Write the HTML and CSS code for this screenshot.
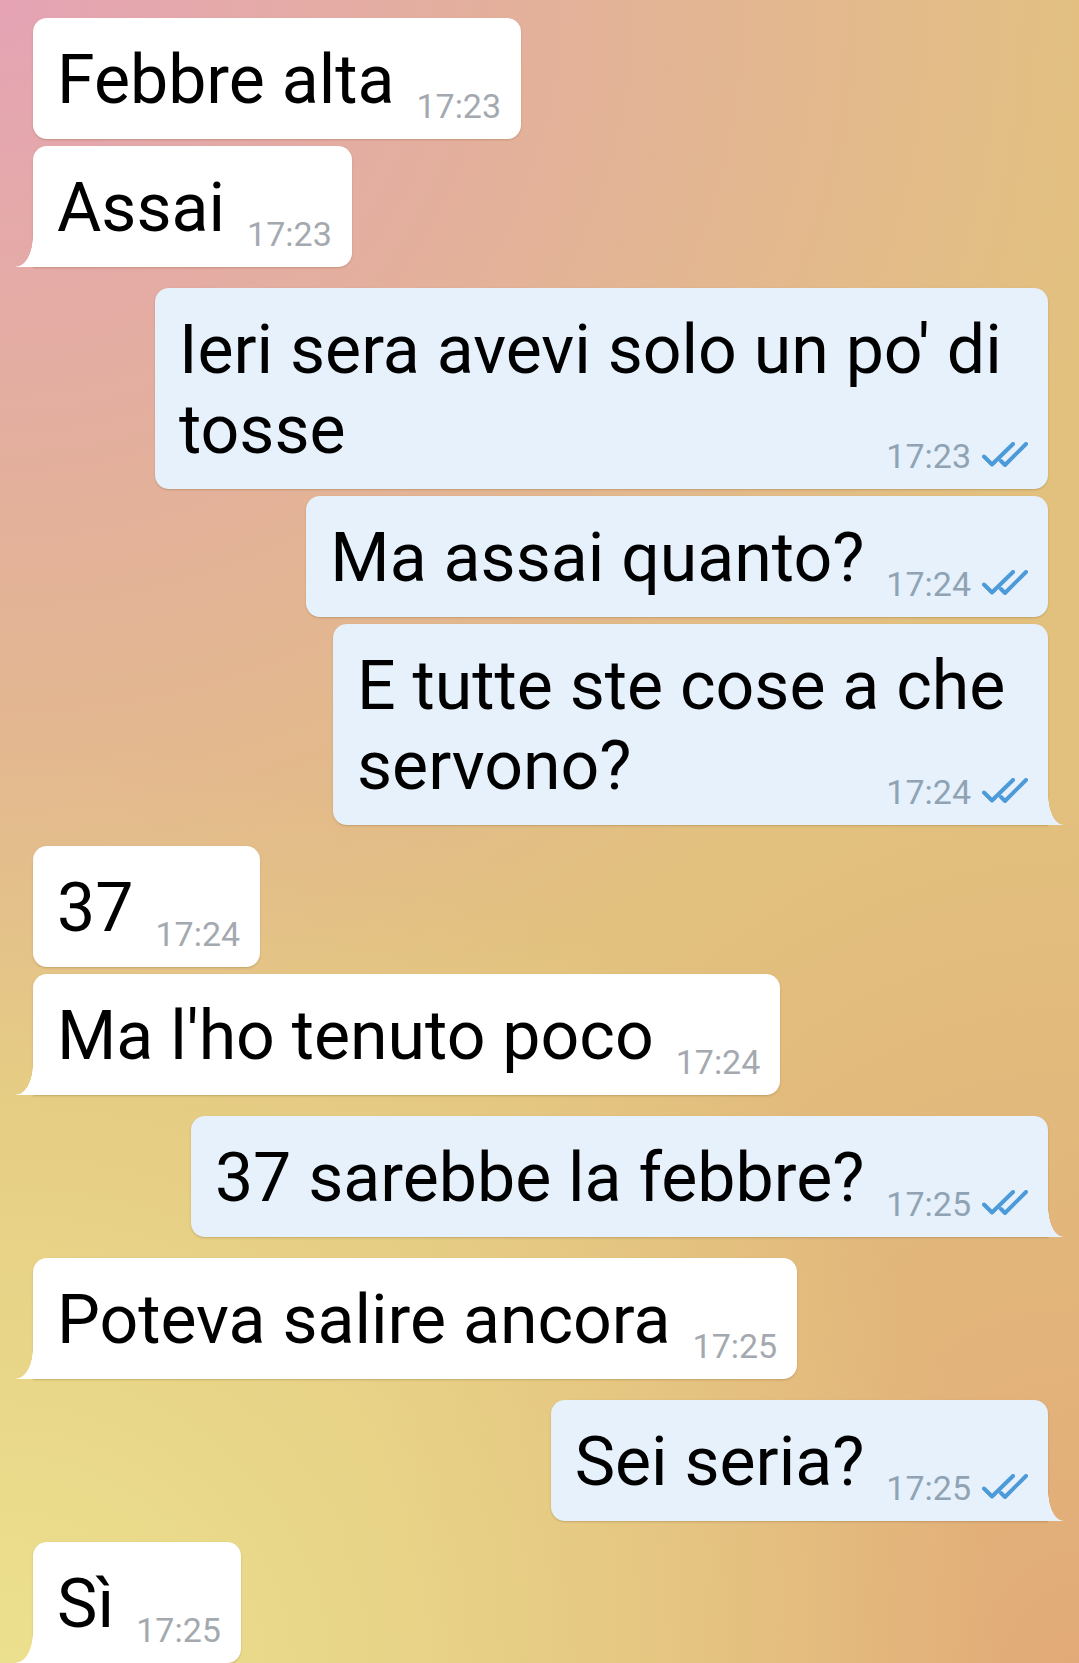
FILE: index.html
```html
<!DOCTYPE html>
<html lang="it">
<head>
    <meta charset="UTF-8">
    <meta name="viewport" content="width=device-width, initial-scale=1.0">
    <title>Chat</title>
    <link rel="stylesheet" href="styles.css">
</head>
<body>
    <div class="chat">
        <div class="bubble in">
            <span class="text">Febbre alta</span><span class="meta">17:23</span>
        </div>
        <div class="bubble in tail">
            <span class="text">Assai</span><span class="meta">17:23</span>
        </div>

        <div class="bubble out wide">
            Ieri sera avevi solo un po' di tosse<span class="meta">17:23<svg class="check" viewBox="0 0 46 26"><path d="M2 14.5 L10 22.5 L31 2"/><path d="M19 19 L23 23 L44 2"/></svg></span>
        </div>
        <div class="bubble out">
            <span class="text">Ma assai quanto?</span><span class="meta">17:24<svg class="check" viewBox="0 0 46 26"><path d="M2 14.5 L10 22.5 L31 2"/><path d="M19 19 L23 23 L44 2"/></svg></span>
        </div>
        <div class="bubble out tail mid">
            E tutte ste cose a che servono?<span class="meta">17:24<svg class="check" viewBox="0 0 46 26"><path d="M2 14.5 L10 22.5 L31 2"/><path d="M19 19 L23 23 L44 2"/></svg></span>
        </div>

        <div class="bubble in">
            <span class="text">37</span><span class="meta">17:24</span>
        </div>
        <div class="bubble in tail">
            <span class="text">Ma l'ho tenuto poco</span><span class="meta">17:24</span>
        </div>

        <div class="bubble out tail">
            <span class="text">37 sarebbe la febbre?</span><span class="meta">17:25<svg class="check" viewBox="0 0 46 26"><path d="M2 14.5 L10 22.5 L31 2"/><path d="M19 19 L23 23 L44 2"/></svg></span>
        </div>

        <div class="bubble in tail">
            <span class="text">Poteva salire ancora</span><span class="meta">17:25</span>
        </div>

        <div class="bubble out tail">
            <span class="text">Sei seria?</span><span class="meta">17:25<svg class="check" viewBox="0 0 46 26"><path d="M2 14.5 L10 22.5 L31 2"/><path d="M19 19 L23 23 L44 2"/></svg></span>
        </div>

        <div class="bubble in tail">
            <span class="text">Sì</span><span class="meta">17:25</span>
        </div>
    </div>
</body>
</html>
```

FILE: styles.css
```css
body {
    margin: 0;
    font-family: Roboto, "Noto Sans", sans-serif;
}

.chat {
    display: flex;
    flex-direction: column;
    align-items: flex-start;
    min-height: 100vh;
    box-sizing: border-box;
    padding: 18px 31px 0 33px;
    overflow: hidden;
    background:
        radial-gradient(1150px 1100px at 0 0, rgba(229, 163, 180, 1) 0%, rgba(229, 163, 180, 0.6) 40%, rgba(229, 163, 180, 0) 100%),
        radial-gradient(1000px 950px at 0 100%, rgba(236, 225, 142, 1) 0%, rgba(236, 225, 142, 0.6) 40%, rgba(236, 225, 142, 0) 100%),
        radial-gradient(750px 950px at 100% 100%, rgba(226, 170, 120, 1) 0%, rgba(226, 170, 120, 0.5) 45%, rgba(226, 170, 120, 0) 100%),
        #e2c17e;
}

.bubble {
    position: relative;
    display: flow-root;
    max-width: 893px;
    box-sizing: border-box;
    margin-bottom: 7px;
    padding: 22px 20px 19px 24px;
    border-radius: 14px;
    background-color: #fff;
    color: #000;
    font-size: 68px;
    line-height: 80px;
    box-shadow: 0 1px 2px rgba(120, 85, 40, 0.3);
}

.bubble:last-child {
    margin-bottom: 0;
}

.bubble.out {
    align-self: flex-end;
    background-color: #e6f1fb;
}

.bubble.wide {
    width: 893px;
}

.bubble.mid {
    width: 715px;
}

.bubble.tail {
    margin-bottom: 21px;
}

.bubble.in.tail {
    border-bottom-left-radius: 0;
}

.bubble.in.tail::before {
    content: '';
    position: absolute;
    left: -17px;
    bottom: 0;
    width: 17px;
    height: 30px;
    background: radial-gradient(17px 30px at 0 0, rgba(255, 255, 255, 0) 97%, #fff 100%);
}

.bubble.out.tail {
    border-bottom-right-radius: 0;
}

.bubble.out.tail::after {
    content: '';
    position: absolute;
    right: -15px;
    bottom: 0;
    width: 15px;
    height: 30px;
    background: radial-gradient(15px 30px at 100% 0, rgba(230, 241, 251, 0) 97%, #e6f1fb 100%);
}

.meta {
    float: right;
    margin: 49px 0 -3px 22px;
    font-size: 34px;
    line-height: 34px;
    color: #a4a9af;
}

.out .meta {
    color: #8fa3b5;
}

.check {
    width: 46px;
    height: 26px;
    margin-left: 11px;
    fill: none;
    stroke: #4d9ad9;
    stroke-width: 4;
    stroke-linecap: round;
    stroke-linejoin: round;
}
```
